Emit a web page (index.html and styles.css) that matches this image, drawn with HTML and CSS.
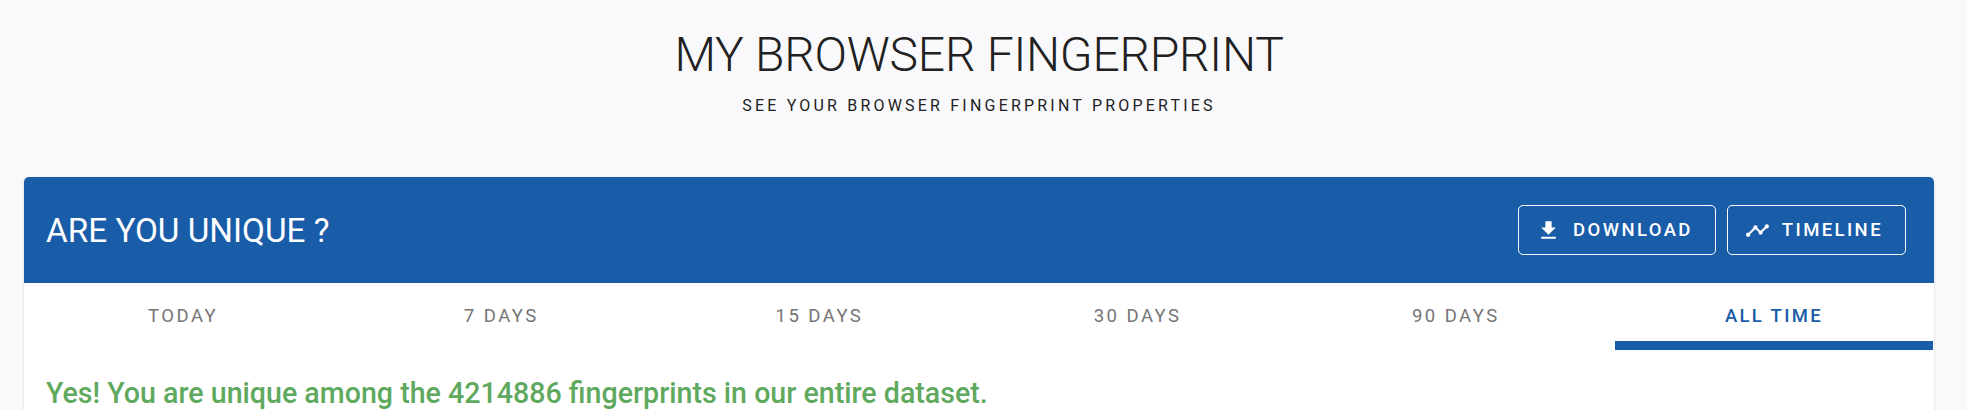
FILE: index.html
```html
<!DOCTYPE html>
<html lang="en">
<head>
<meta charset="utf-8">
<title>My Browser Fingerprint</title>
<link rel="stylesheet" href="styles.css">
</head>
<body>
<header class="hero">
  <h1 class="hero-title">MY BROWSER FINGERPRINT</h1>
  <p class="hero-sub">SEE YOUR BROWSER FINGERPRINT PROPERTIES</p>
</header>
<main class="card">
  <div class="card-head">
    <h2 class="card-title">ARE YOU UNIQUE ?</h2>
    <div class="actions">
      <button class="btn" type="button">
        <svg class="btn-icon" viewBox="0 0 24 24"><path d="M5 20h14v-2H5m14-9h-4V3H9v6H5l7 7 7-7z"/></svg>
        DOWNLOAD
      </button>
      <button class="btn" type="button">
        <svg class="btn-icon" viewBox="0 0 24 24"><path d="M23 8c0 1.1-.9 2-2 2-.18 0-.35-.02-.51-.07l-3.56 3.55c.05.16.07.34.07.52 0 1.1-.9 2-2 2s-2-.9-2-2c0-.18.02-.36.07-.52l-2.55-2.55c-.16.05-.34.07-.52.07s-.36-.02-.52-.07l-4.55 4.56c.05.16.07.33.07.51 0 1.1-.9 2-2 2s-2-.9-2-2 .9-2 2-2c.18 0 .35.02.51.07l4.56-4.55C8.02 9.36 8 9.18 8 9c0-1.1.9-2 2-2s2 .9 2 2c0 .18-.02.36-.07.52l2.55 2.55c.16-.05.34-.07.52-.07s.36.02.52.07l3.55-3.56C19.02 8.35 19 8.18 19 8c0-1.1.9-2 2-2s2 .9 2 2z"/></svg>
        TIMELINE
      </button>
    </div>
  </div>
  <nav class="tabs">
    <a class="tab">TODAY</a>
    <a class="tab">7 DAYS</a>
    <a class="tab">15 DAYS</a>
    <a class="tab">30 DAYS</a>
    <a class="tab">90 DAYS</a>
    <a class="tab tab-active">ALL TIME</a>
  </nav>
  <p class="verdict">Yes! You are unique among the 4214886 fingerprints in our entire dataset.</p>
</main>
</body>
</html>
```
FILE: styles.css
```css
* { box-sizing: border-box; }
html, body { height: 100%; overflow: hidden; }
body {
  margin: 0;
  background: #f9f9fc;
  font-family: Roboto, "Liberation Sans", sans-serif;
  color: #212121;
}
.hero { text-align: center; padding: 25px 9px 0 0; height: 177px; }
.hero-title {
  margin: 0;
  font-size: 48px;
  line-height: 60px;
  font-weight: 300;
  letter-spacing: -0.23px;
}
.hero-sub {
  margin: 11px 0 0;
  font-size: 16px;
  line-height: 20px;
  font-weight: 400;
  letter-spacing: 3.2px;
}
.card {
  margin: 0 33px 0 24px;
  background: #fff;
  border-radius: 5px 5px 0 0;
  box-shadow: 0 2px 1px -1px rgba(0,0,0,.2), 0 1px 1px 0 rgba(0,0,0,.14), 0 1px 3px 0 rgba(0,0,0,.12);
  height: 233px;
}
.card-head {
  height: 106px;
  background: #195ca8;
  border-radius: 5px 5px 0 0;
  display: flex;
  align-items: center;
  justify-content: space-between;
  padding: 0 28px 0 22px;
}
.card-title {
  margin: 2px 0 0;
  font-size: 33.3px;
  line-height: 40px;
  font-weight: 400;
  color: #fff;
}
.actions { display: flex; gap: 11px; }
.btn {
  height: 50px;
  display: flex;
  align-items: center;
  gap: 12px;
  padding: 0 22px 0 17px;
  background: transparent;
  border: 1px solid #fff;
  border-radius: 5px;
  color: #fff;
  font: 500 18.5px Roboto, sans-serif;
  letter-spacing: 2.4px;
}
.btn-icon { width: 25px; height: 25px; fill: #fff; }
.tabs { display: flex; height: 67px; }
.tab {
  flex: 1;
  text-align: center;
  padding-top: 21px;
  font-size: 18.5px;
  line-height: 24px;
  font-weight: 450;
  letter-spacing: 2.45px;
  color: #757575;
}
.tab-active { color: #195ca8; border-bottom: 9px solid #195ca8; margin-right: 1px; font-weight: 500; letter-spacing: 2.3px; }
.verdict {
  margin: 0;
  padding: 25px 0 0 22px;
  font-size: 28.6px;
  line-height: 36px;
  font-weight: 500;
  color: #5fa95f;
}
```
